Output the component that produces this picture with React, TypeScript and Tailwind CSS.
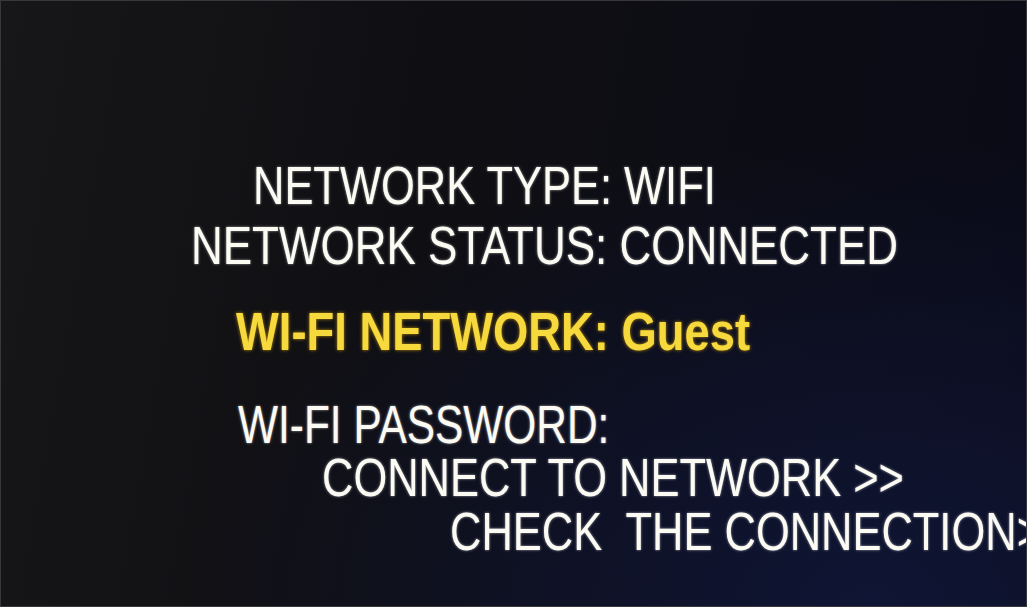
const lineBase =
  "whitespace-pre leading-[53px] text-[53px] text-[#fbfbf4] [text-shadow:0_0_3px_rgba(255,255,255,0.6)]";
const squeeze = "inline-block origin-left scale-x-[0.82]";

export default function App() {
  return (
    <div
      className="w-[1027px] h-[607px] overflow-hidden border border-[#38383c] bg-[radial-gradient(ellipse_at_85%_100%,#0f1534_0%,rgba(12,16,40,0)_55%),linear-gradient(100deg,#171719_0%,#0f0f13_40%,#0a0a17_100%)]"
      style={{ fontFamily: '"Liberation Sans", Arial, sans-serif' }}
    >
      <div className="flex flex-col pt-[158px]">
        <div className={`${lineBase} pl-[252px]`}>
          <span className={squeeze}>NETWORK TYPE: WIFI</span>
        </div>
        <div className={`${lineBase} pl-[190px] mt-[7px]`}>
          <span className="inline-block origin-left scale-x-[0.83]">NETWORK STATUS: CONNECTED</span>
        </div>
        <div className="whitespace-pre leading-[53px] text-[54px] font-bold text-[#f6d93c] pl-[235px] mt-[33px] [text-shadow:0_0_4px_rgba(255,190,0,0.7)]">
          <span className="inline-block origin-left scale-x-[0.84]">WI-FI NETWORK: Guest</span>
        </div>
        <div className={`${lineBase} pl-[237px] mt-[40px]`}>
          <span className="inline-block origin-left scale-x-[0.8]">WI-FI PASSWORD:</span>
        </div>
        <div className={`${lineBase} pl-[321px]`}>
          <span className={squeeze}>CONNECT TO NETWORK &gt;&gt;</span>
        </div>
        <div className={`${lineBase} pl-[449px] mt-[1px]`}>
          <span className={squeeze}>CHECK  THE CONNECTION&gt;&gt;</span>
        </div>
      </div>
    </div>
  );
}
